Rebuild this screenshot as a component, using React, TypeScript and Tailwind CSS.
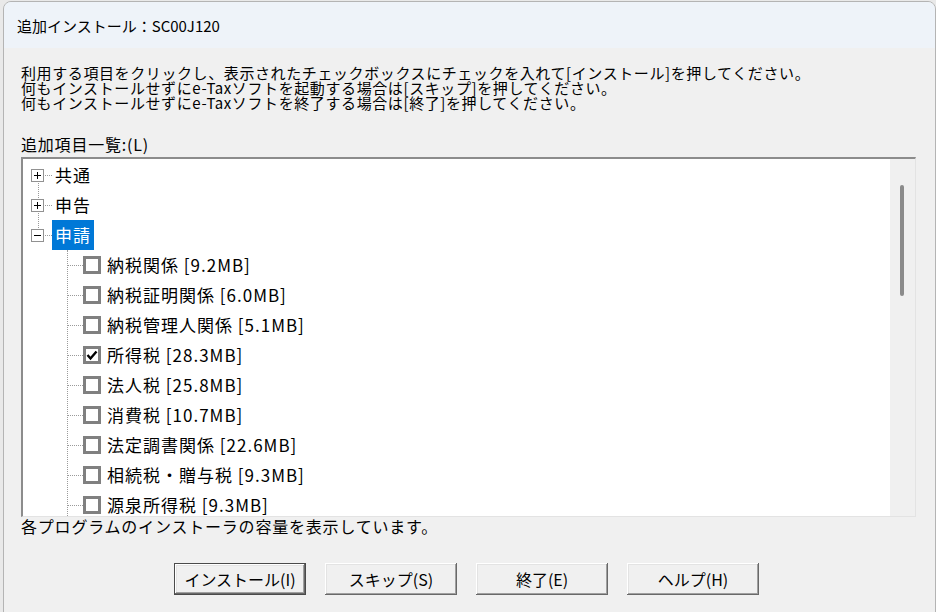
import React from "react";

const children = [
  { label: "納税関係 [9.2MB]", checked: false },
  { label: "納税証明関係 [6.0MB]", checked: false },
  { label: "納税管理人関係 [5.1MB]", checked: false },
  { label: "所得税 [28.3MB]", checked: true },
  { label: "法人税 [25.8MB]", checked: false },
  { label: "消費税 [10.7MB]", checked: false },
  { label: "法定調書関係 [22.6MB]", checked: false },
  { label: "相続税・贈与税 [9.3MB]", checked: false },
  { label: "源泉所得税 [9.3MB]", checked: false },
];

function ExpandBox({ open }: { open: boolean }) {
  return (
    <div className="relative z-10 w-[13px] h-[13px] border border-[#919191] bg-white flex items-center justify-center">
      <svg width="11" height="11" viewBox="0 0 11 11">
        <line x1="2" y1="5.5" x2="9" y2="5.5" stroke="#000" strokeWidth="1" />
        {!open && <line x1="5.5" y1="2" x2="5.5" y2="9" stroke="#000" strokeWidth="1" />}
      </svg>
    </div>
  );
}

function TopRow({ label, open, selected }: { label: string; open: boolean; selected?: boolean }) {
  return (
    <div className="h-[30px] flex items-center pl-[8px]">
      <ExpandBox open={open} />
      <div className="w-[7px] ml-[1px] border-t border-dotted border-[#9a9a9a]" />
      <div
        className={
          selected
            ? "h-[30px] flex items-center px-[3px] bg-[#0078d7] text-white"
            : "h-[30px] flex items-center px-[3px] text-black"
        }
      >
        {label}
      </div>
    </div>
  );
}

function CheckBox({ checked }: { checked: boolean }) {
  return (
    <div className="w-[18px] h-[18px] border-[3px] border-[#808080] bg-white flex items-center justify-center">
      {checked && (
        <svg width="12" height="12" viewBox="0 0 12 12">
          <path d="M1.5 6 L4.5 9.5 L10.5 2.5" fill="none" stroke="#000" strokeWidth="2.4" />
        </svg>
      )}
    </div>
  );
}

function Btn({ label, def }: { label: string; def?: boolean }) {
  return (
    <div
      className={
        def
          ? "w-[132px] h-[32px] flex items-center justify-center bg-[#f0f0f0] border border-[#4a4a4a] shadow-[inset_-1px_-1px_0_#696969,inset_1px_1px_0_#ffffff,inset_-2px_-2px_0_#a0a0a0,inset_2px_2px_0_#e3e3e3] text-[16px] text-black"
          : "w-[132px] h-[32px] flex items-center justify-center bg-[#f0f0f0] shadow-[inset_-1px_-1px_0_#696969,inset_1px_1px_0_#ffffff,inset_-2px_-2px_0_#a0a0a0,inset_2px_2px_0_#e3e3e3] text-[16px] text-black"
      }
    >
      {label}
    </div>
  );
}

export default function App() {
  return (
    <div className="w-[936px] h-[612px] bg-[#e9e9e9] pl-[3px] pt-[1px] overflow-hidden font-['Noto_Sans_CJK_JP','Noto_Sans',sans-serif] text-black">
      <div className="w-[933px] h-[620px] flex flex-col rounded-t-[8px] border border-[#b4b4b4] overflow-hidden">
        <div className="h-[46px] shrink-0 bg-[#eef3f9] flex items-center pl-[13px] text-[15px] leading-none">
          追加インストール：SC00J120
        </div>
        <div className="flex-1 bg-[#f0f0f0] pl-[17px] pt-[17px] flex flex-col">
          <div className="text-[15px] leading-[15px] tracking-[0.6px] whitespace-nowrap">
            <div>利用する項目をクリックし、表示されたチェックボックスにチェックを入れて[インストール]を押してください。</div>
            <div>何もインストールせずにe-Taxソフトを起動する場合は[スキップ]を押してください。</div>
            <div>何もインストールせずにe-Taxソフトを終了する場合は[終了]を押してください。</div>
          </div>
          <div className="mt-[25px] text-[16px] leading-[18px] tracking-[0.8px]">追加項目一覧:(L)</div>
          <div className="mt-[4px] w-[895px] h-[360px] flex border-t-2 border-l-2 border-[#8c8c8c] border-r border-b border-r-[#e3e3e3] border-b-[#e3e3e3]">
            <div className="relative flex-1 bg-white overflow-hidden pt-[1px] text-[17px] tracking-[1px]">
              <div className="absolute left-[15px] top-[17px] h-[60px] border-l border-dotted border-[#9a9a9a]" />
              <TopRow label="共通" open={false} />
              <TopRow label="申告" open={false} />
              <TopRow label="申請" open={true} selected />
              <div className="ml-[44px] border-l border-dotted border-[#9a9a9a]">
                {children.map((c) => (
                  <div key={c.label} className="h-[30px] flex items-center">
                    <div className="w-[15px] border-t border-dotted border-[#9a9a9a]" />
                    <CheckBox checked={c.checked} />
                    <div className="ml-[6px] whitespace-nowrap">{c.label}</div>
                  </div>
                ))}
              </div>
            </div>
            <div className="w-[25px] bg-[#f0f0f0] pt-[26px] pl-[10px]">
              <div className="w-[4px] h-[111px] rounded-full bg-[#8b8b8b]" />
            </div>
          </div>
          <div className="text-[16px] leading-[18px] tracking-[0.8px]">各プログラムのインストーラの容量を表示しています。</div>
          <div className="mt-[28px] ml-[153px] flex gap-[19px]">
            <Btn label="インストール(I)" def />
            <Btn label="スキップ(S)" />
            <Btn label="終了(E)" />
            <Btn label="ヘルプ(H)" />
          </div>
        </div>
      </div>
    </div>
  );
}
